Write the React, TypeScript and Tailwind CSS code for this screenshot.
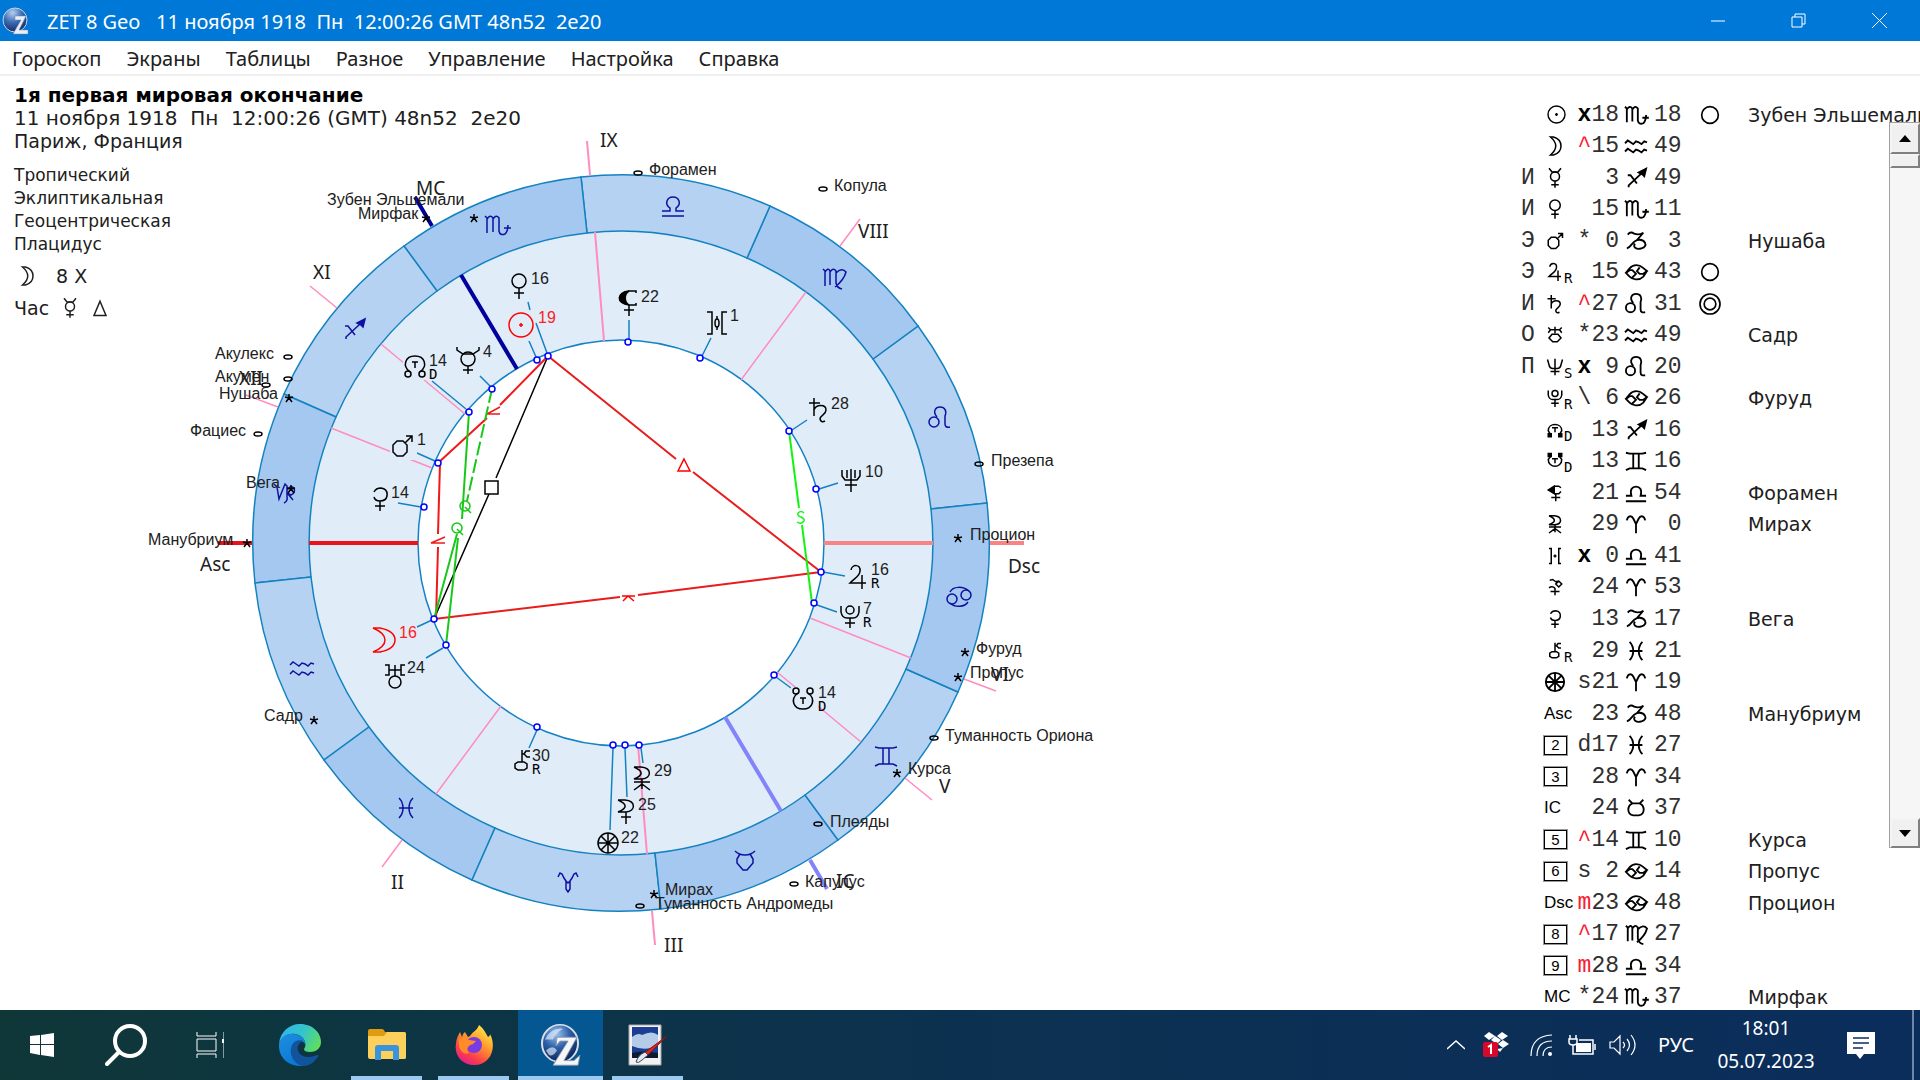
import type { ReactNode } from "react";

const verdana = "font-['DejaVu_Sans',sans-serif]";
const segoe = "font-['Noto_Sans','Open_Sans',sans-serif]";

/* Astrological symbols, each drawn in a 24 x 24 box */
const glyphs: Record<string, ReactNode> = {
  aries: <path d="M2 8 C3 3 7 2 9 6 L12 12 V22 M12 12 L15 6 C17 2 21 3 22 8" />,
  ariesWheel: <path d="M2 7 L4 3 L6 4 L8 8 L10 11 V19 L12 22 L14 19 V11 L16 8 L18 4 L20 3 L22 7 M10 11 L12 13 L14 11" />,
  taurus: <path d="M4 3 L8 7 H16 L20 3 M8 7 C2 10 2 19 9 20 H15 C22 19 22 10 16 7" />,
  taurusWheel: <path d="M2 2 Q6 6 12 6 Q18 6 22 2 M7 5 L4 10 V14 L10 21 H14 L20 14 V10 L17 5" />,
  gemini: <path d="M1 3 L5 4 H19 L23 3 M1 22 L5 20 H19 L23 22 M9 4 V20 M15 4 V20" />,
  cancer: (
    <>
      <path d="M3 7 C6 1 16 1 22 6 M21 17 C18 22 8 23 3 18" />
      <circle cx="5" cy="14" r="5" />
      <circle cx="19" cy="10" r="5" />
    </>
  ),
  cancerTable: <path d="M1 13 L5 8 C9 3 16 4 19 7 L24 11 L20 14 H16 L13 11 L16 7 M24 11 L20 17 C15 22 8 20 5 17 L1 13 L5 10 H8 L12 14 L8 18" />,
  leo: (
    <>
      <circle cx="6" cy="16" r="5" />
      <path d="M9 11 C4 5 8 1 12 1 C17 1 19 5 17 10 V18 Q17 22 22 21" />
    </>
  ),
  virgo: <path d="M1 3 L3 5 V20 M3 6 Q6 1 8 5 V19 M8 6 Q11 1 14 5 V17 Q15 22 20 23 M14 7 Q20 1 24 6 Q22 14 13 21" />,
  libra: <path d="M1 17 H9 V14 C3 10 6 3 12 3 C18 3 21 10 15 14 V17 H23 M1 22 H23" />,
  libraTable: <path d="M1 15 H7 C5 8 8 5 12 5 C16 5 19 8 17 15 H23 M1 21 H23" />,
  scorpio: <path d="M0 3 L2 5 V20 M2 6 Q5 1 8 5 V19 M8 6 Q11 1 14 5 V18 Q15 23 20 21 Q23 18 23 12 M19 15 H26" />,
  sagittarius: (
    <>
      <path d="M3 9 H6 L13 18 M4 22 V20 L18 7" />
      <path d="M23 2 L21 10 L19 8 L15 6 Z" fill="currentColor" />
    </>
  ),
  capricorn: <path d="M3 5 Q6 1 10 4 Q15 6 20 3 L13 11 M2 20 C7 19 7 13 13 11 C22 9 26 18 18 20 C12 22 8 18 11 15" />,
  capricornWheel: <path d="M1 4 L4 7 L6 19 L12 4 L14 6 V17 Q15 21 11 23 M14 10 Q17 5 21 8 Q23 13 18 15 L14 13 M15 14 L20 20" />,
  aquarius: <path d="M0 9 L3 6 L6 8 L9 10 L12 7 L15 8 L18 10 L21 7 L24 8 M0 18 L3 15 L6 17 L9 19 L12 16 L15 17 L18 19 L21 16 L24 17" />,
  pisces: <path d="M5 2 Q9 6 9 12 Q9 18 5 22 M19 2 Q15 6 15 12 Q15 18 19 22 M5 12 H19" />,
  sun: (
    <>
      <circle cx="12" cy="12" r="12" />
      <path d="M12 10 V14 M10 12 H14" />
    </>
  ),
  moon: <path d="M2 0 H9 Q24 3 24 12 Q24 21 9 24 H2 Q14 19 14 12 Q14 5 2 0 Z" />,
  moonTable: <path d="M6 0 H10 Q20 3 20 12 Q20 21 10 24 H6 Q13 18 13 12 Q13 6 6 0 Z" />,
  mercury: (
    <>
      <circle cx="12" cy="12" r="7" />
      <path d="M1 0 V3 L7 7 H17 L23 3 V0 M12 19 V27 M7 23 H17" />
    </>
  ),
  mercuryTable: (
    <>
      <circle cx="12" cy="10" r="6" />
      <path d="M4 -1 L8 4 H16 L20 -1 M12 16 V25 M7 21 H17" />
    </>
  ),
  venus: (
    <>
      <circle cx="12" cy="7" r="7" />
      <path d="M12 14 V25 M7 19 H17" />
    </>
  ),
  mars: (
    <>
      <path d="M7 7 H13 L17 11 V18 L13 22 H7 L3 18 V11 Z M15 9 L22 2 M16 2 H22 V8" />
    </>
  ),
  jupiter: <path d="M5 5 C6 -1 15 -1 14 6 C14 11 9 13 4 18 H20 M16 10 V24" />,
  saturn: <path d="M2 5 H13 M7 0 V18 M7 12 C9 6 19 6 19 12 C19 17 13 17 13 21 Q14 25 18 23" />,
  uranus: (
    <>
      <path d="M2 1 H6 V11 H2 M22 1 H18 V11 H22 M6 6 H18 M12 1 V12" />
      <circle cx="12" cy="18" r="6" />
    </>
  ),
  uranusTable: (
    <>
      <path d="M3 2 L6 5 L3 9 M21 2 L18 5 L21 9 M6 5 H18 M12 1 V10" />
      <path d="M8 11 H16 L20 16 L15 21 H9 L4 16 Z" />
    </>
  ),
  neptune: <path d="M3 2 V8 L6 12 H18 L21 8 V2 M8 2 V10 M16 2 V10 M12 1 V24 M6 17 H18" />,
  neptuneTable: <path d="M2 2 L4 9 Q5 14 9 14 H15 Q19 14 20 9 L22 2 M12 1 V23 M6 18 H18" />,
  pluto: (
    <>
      <path d="M3 2 V8 Q4 14 9 14 H15 Q20 14 21 8 V2 M12 14 V24 M7 19 H17" />
      <circle cx="12" cy="6" r="4" />
    </>
  ),
  northNode: (
    <>
      <path d="M7 18 C-1 12 2 2 12 2 C22 2 25 12 17 18 M9 8 H15 M12 8 V14" />
      <circle cx="5" cy="20" r="3" />
      <circle cx="19" cy="20" r="3" />
    </>
  ),
  northNodeTable: (
    <>
      <path d="M6 18 L3 13 C3 2 21 2 21 13 L18 18 M8 9 H16 M12 9 V15" />
      <path d="M3 17 H7 V21 H3 Z M17 17 H21 V21 H17 Z" fill="currentColor" />
    </>
  ),
  southNode: (
    <>
      <path d="M7 6 C-1 12 2 22 12 22 C22 22 25 12 17 6 M9 11 H15 M12 11 V17" />
      <circle cx="5" cy="4" r="3" />
      <circle cx="19" cy="4" r="3" />
    </>
  ),
  southNodeTable: (
    <>
      <path d="M6 6 L3 10 C3 22 21 22 21 10 L18 6 M8 9 H16 M12 9 V15" />
      <path d="M3 2 H7 V6 H3 Z M17 2 H21 V6 H17 Z" fill="currentColor" />
    </>
  ),
  lilith: (
    <>
      <path d="M12 1 C-1 2 -1 14 12 15 C7 12 7 4 12 1 Z M7 4 L3 6 V10 L7 13 Z" fill="currentColor" />
      <path d="M11 1 H19 V3 M11 15 H19 V13 M12 15 V26 M7 20 H17" />
    </>
  ),
  lilithTable: (
    <>
      <path d="M11 3 L3 8 L11 13 Z" fill="currentColor" />
      <path d="M11 3 H17 L20 5 M12 13 H17 L20 10 M13 13 V23 M7 18 H19" />
    </>
  ),
  selena: <path d="M4 1 H11 C22 2 22 12 12 13 H4 C14 9 13 5 4 1 M12 13 V25 M7 18 H17" />,
  vesta: <path d="M4 1 H11 C22 2 22 12 12 13 H4 C14 9 13 5 4 1 M4 16 H20 M12 13 V18 L4 24 M12 18 L20 24 M12 18 V23" />,
  proserpina: (
    <>
      <path d="M2 1 H7 V23 H2 M22 1 H17 V23 H22 M12 5 V8 M12 16 V19" />
      <ellipse cx="12" cy="12" rx="2" ry="4" />
    </>
  ),
  proserpinaTable: <path d="M4 2 H7 V22 H4 M20 2 H17 V22 H20 M10 12 H14 M12 10 V14 M7 12 H8 M16 12 H17" />,
  pallas: <path d="M5 3 L9 2 L13 5 L17 4 L21 8 L17 12 L13 8 L17 4 M4 13 Q9 10 12 14 V23 M6 18 H18" />,
  ceres: <path d="M6 5 Q8 1 13 1 Q20 2 19 9 Q18 14 12 14 Q7 14 6 10 M12 14 V24 M7 19 H17" />,
  chiron: (
    <path d="M12 13 V1 M20 2 H16 L14 5 L17 8 H20 M12 5 H14 M8 13 H14 L17 15 V19 L14 21 H8 L5 19 V15 Z" />
  ),
  fortune: (
    <>
      <circle cx="12" cy="12" r="10" />
      <path d="M12 2 V22 M2 12 H22 M5 5 L19 19 M19 5 L5 19" />
    </>
  ),
  triangle: <path d="M12 3 L20 22 H4 Z" />,
  ring: <circle cx="12" cy="12" r="10" />,
  doubleRing: (
    <>
      <circle cx="12" cy="12" r="12" />
      <circle cx="12" cy="12" r="7" />
    </>
  ),
};

function Glyph({ name, className }: { name: string; className: string }) {
  return (
    <svg viewBox="0 0 24 24" className={`overflow-visible ${className}`} fill="none" stroke="currentColor" strokeWidth="2" aria-hidden="true">
      {glyphs[name]}
    </svg>
  );
}

/* ---- wheel ---- */
const CX = 621;
const CY = 543;
const R1 = 203;
const R2 = 312;
const R3 = 368;
const SIGN_OFFSET = 6.2;

const at = (deg: number, r: number): [number, number] => [
  Math.round(CX + r * Math.cos((deg * Math.PI) / 180)),
  Math.round(CY - r * Math.sin((deg * Math.PI) / 180)),
];

const sector = (a: number) => {
  const [x1, y1] = at(a, R3);
  const [x2, y2] = at(a + 30, R3);
  const [x3, y3] = at(a + 30, R2);
  const [x4, y4] = at(a, R2);
  return `M${x1} ${y1} A${R3} ${R3} 0 0 0 ${x2} ${y2} L${x3} ${y3} A${R2} ${R2} 0 0 1 ${x4} ${y4} Z`;
};

const signs: [string, number, number][] = [
  ["leo", 940, 418],
  ["virgo", 834, 278],
  ["libra", 673, 206],
  ["scorpio", 497, 225],
  ["sagittarius", 354, 329],
  ["capricornWheel", 285, 492],
  ["aquarius", 302, 668],
  ["pisces", 406, 808],
  ["ariesWheel", 568, 882],
  ["taurusWheel", 745, 861],
  ["gemini", 886, 756],
  ["cancer", 959, 597],
];

const pink = "#ff8cc0";
const cusps: { a: number; color: string; w: number }[] = [
  { a: 180, color: "#e8141c", w: 4 },
  { a: 233.6, color: pink, w: 1.5 },
  { a: 274.8, color: pink, w: 2 },
  { a: 300.8, color: "#8484fa", w: 4 },
  { a: 320.4, color: pink, w: 1.5 },
  { a: 338.4, color: pink, w: 1.5 },
  { a: 0, color: "#f88488", w: 4 },
  { a: 53.6, color: pink, w: 1.5 },
  { a: 94.8, color: pink, w: 2 },
  { a: 120.8, color: "#00009c", w: 4 },
  { a: 140.4, color: pink, w: 1.5 },
  { a: 158.4, color: pink, w: 1.5 },
];

const planets: { g: string; x: number; y: number; d: string; dx: number; dy: number; red?: boolean; s?: string }[] = [
  { g: "venus", x: 519, y: 286, d: "16", dx: 531, dy: 284 },
  { g: "sun", x: 521, y: 325, d: "19", dx: 538, dy: 323, red: true },
  { g: "mercury", x: 468, y: 359, d: "4", dx: 483, dy: 357 },
  { g: "northNode", x: 415, y: 366, d: "14", dx: 429, dy: 366, s: "D" },
  { g: "mars", x: 402, y: 446, d: "1", dx: 417, dy: 445 },
  { g: "ceres", x: 380, y: 499, d: "14", dx: 391, dy: 498 },
  { g: "lilith", x: 629, y: 302, d: "22", dx: 641, dy: 302 },
  { g: "proserpina", x: 717, y: 323, d: "1", dx: 730, dy: 321 },
  { g: "saturn", x: 819, y: 410, d: "28", dx: 831, dy: 409 },
  { g: "neptune", x: 851, y: 480, d: "10", dx: 865, dy: 477 },
  { g: "jupiter", x: 858, y: 577, d: "16", dx: 871, dy: 575, s: "R" },
  { g: "pluto", x: 850, y: 616, d: "7", dx: 863, dy: 614, s: "R" },
  { g: "southNode", x: 803, y: 699, d: "14", dx: 818, dy: 698, s: "D" },
  { g: "moon", x: 383, y: 640, d: "16", dx: 399, dy: 638, red: true },
  { g: "uranus", x: 395, y: 676, d: "24", dx: 407, dy: 673 },
  { g: "chiron", x: 522, y: 761, d: "30", dx: 532, dy: 761, s: "R" },
  { g: "vesta", x: 642, y: 778, d: "29", dx: 654, dy: 776 },
  { g: "selena", x: 626, y: 811, d: "25", dx: 638, dy: 810 },
  { g: "fortune", x: 608, y: 843, d: "22", dx: 621, dy: 843 },
];

const points: [number, number][] = [
  [548, 356], [537, 360], [492, 389], [469, 412], [438, 463], [424, 507], [628, 342], [700, 358], [789, 431],
  [816, 489], [821, 572], [814, 603], [774, 675], [434, 619], [446, 645], [537, 727], [613, 745], [625, 745], [639, 745],
];

const leaders =
  "M528 302 L530 310 M536 323 L547 353 M529 341 L536 357 M480 376 L490 386 M432 381 L466 409 M417 453 L435 461 " +
  "M398 503 L421 507 M629 320 V339 M711 338 L702 356 M807 420 L792 430 M838 483 L819 489 M823 572 L845 576 " +
  "M817 605 L837 612 M776 677 L791 688 M417 627 L432 620 M426 658 L443 648 M529 748 L537 730 M613 748 L610 830 " +
  "M625 748 L627 797 M641 748 L643 763";

const labels: [string, number, number][] = [
  ["Зубен Эльшемали", 327, 205], ["Мирфак", 358, 219], ["Форамен", 649, 175], ["Копула", 834, 191],
  ["Акулекс", 215, 359], ["Акумен", 215, 382], ["Нушаба", 219, 399], ["Фациес", 190, 436], ["Вега", 246, 488],
  ["Манубриум", 148, 545], ["Садр", 264, 721], ["Мирах", 665, 895], ["Туманность Андромеды", 655, 909],
  ["Капулус", 805, 887], ["Плеяды", 830, 827], ["Курса", 908, 774], ["Туманность Ориона", 945, 741],
  ["Пропус", 970, 678], ["Фуруд", 976, 654], ["Процион", 970, 540], ["Презепа", 991, 466],
];

const houses: [string, number, number][] = [
  ["MC", 416, 195], ["IX", 600, 147], ["VIII", 858, 238], ["XI", 313, 279], ["XII", 239, 385], ["Asc", 200, 571],
  ["II", 391, 889], ["III", 664, 952], ["IC", 836, 888], ["V", 939, 793], ["VI", 991, 681], ["Dsc", 1008, 573],
];

const stars: [number, number][] = [
  [426, 218], [474, 218], [289, 398], [291, 489], [247, 543], [314, 720], [654, 894], [897, 773], [958, 677], [965, 652], [958, 538],
];
const nebulae: [number, number][] = [
  [638, 173], [823, 189], [288, 357], [288, 379], [266, 385], [258, 434], [640, 906], [794, 884], [818, 824], [934, 738], [979, 464],
];

function Wheel() {
  return (
    <svg
      viewBox="0 76 1400 934"
      preserveAspectRatio="xMinYMin meet"
      className="col-start-1 row-start-1 h-full w-full"
      fill="none"
      role="img"
      aria-label="Карта гороскопа"
    >
      <circle cx={CX} cy={CY} r={R2} fill="#e0edf9" />
      <circle cx={CX} cy={CY} r={R1} fill="#fff" stroke="#1482c4" strokeWidth="1.5" />
      {signs.map(([name], i) => (
        <path key={name} d={sector(SIGN_OFFSET + i * 30)} fill={i % 2 ? "#a5c8f0" : "#b5d2f2"} stroke="#1482c0" strokeWidth="1.5" />
      ))}
      {cusps.map((c) => {
        const [x1, y1] = at(c.a, R1);
        const [x2, y2] = at(c.a, R2);
        const [x3, y3] = at(c.a, R3 + 1);
        const [x4, y4] = at(c.a, 403);
        return <path key={c.a} d={`M${x1} ${y1} L${x2} ${y2} M${x3} ${y3} L${x4} ${y4}`} stroke={c.color} strokeWidth={c.w} />;
      })}

      <g strokeWidth="1.5">
        <path d="M548 356 L496 478 M489 494 L434 619" stroke="#000" />
        <rect x="485" y="481" width="13" height="13" stroke="#000" />
        <path d="M548 356 L500 405 M487 418 L438 463 M440 463 L438 534 M438 547 L436 619" stroke="#f01818" strokeWidth="2" />
        <path d="M500 407 L487 414 H500" stroke="#f01818" />
        <path d="M445 537 L431 543 H445" stroke="#f01818" />
        <path d="M548 356 L676 459 M693 472 L821 572 M434 619 L620 597 M638 595 L821 572" stroke="#e81c1c" strokeWidth="2" />
        <path d="M684 459 L690 471 H678 Z" stroke="#ff0000" />
        <path d="M622 596 H635 M628 596 L623 601 M628 596 L634 601" stroke="#ff0000" />
        <path d="M469 412 L462 519 M457 534 L434 619 M458 538 L446 645" stroke="#18c818" strokeWidth="2" />
        <path d="M492 389 L467 501" stroke="#18c818" strokeDasharray="14 4" strokeWidth="2" />
        <circle cx="465" cy="506" r="5" stroke="#18c818" />
        <path d="M465 507 L471 513" stroke="#18c818" />
        <circle cx="457" cy="528" r="5" stroke="#18c818" />
        <path d="M457 529 L463 535" stroke="#18c818" />
        <path d="M789 431 L799 508 M802 525 L812 603" stroke="#14f414" strokeWidth="2" />
        <path d="M804 513 Q801 510 798 513 Q797 516 801 517 Q805 519 804 521 Q801 525 797 522" stroke="#14f414" />
      </g>

      <path d={leaders} stroke="#1482c0" strokeWidth="1.5" />
      {points.map(([x, y]) => (
        <circle key={`${x}-${y}`} cx={x} cy={y} r="3" fill="#fff" stroke="#0000ff" strokeWidth="1.5" />
      ))}

      <g stroke="#1010a0" color="#1010a0" strokeWidth="1.5">
        {signs.map(([name, x, y]) => (
          <g key={name} transform={`translate(${x - 12} ${y - 12})`}>
            {glyphs[name]}
          </g>
        ))}
      </g>

      {planets.map((p) => (
        <g key={p.g} className="font-['Liberation_Sans',sans-serif] text-base">
          {p.g === "northNode" || p.g === "southNode" || p.g === "mars" ? (
            <rect x={p.x - 12} y={p.y - 12} width="27" height="26" fill="#e0edf9" />
          ) : null}
          <g
            transform={`translate(${p.x - 12} ${p.y - 12})`}
            stroke={p.red ? "#ff0000" : "#000"}
            color="#000"
            strokeWidth="1.5"
          >
            {glyphs[p.g]}
          </g>
          <text x={p.dx} y={p.dy} fill={p.red ? "#ff2020" : "#202020"}>
            {p.d}
          </text>
          {p.s ? (
            <text x={p.dx} y={p.dy + 13} fill="#000" className="font-['DejaVu_Sans_Mono',monospace] text-sm">
              {p.s}
            </text>
          ) : null}
        </g>
      ))}

      <g stroke="#000" strokeWidth="1.5">
        {stars.map(([x, y]) => (
          <path key={`${x}-${y}`} d={`M${x} ${y - 4} V${y} L${x - 3} ${y + 4} M${x} ${y} L${x + 3} ${y + 4} M${x - 4} ${y - 1} L${x} ${y} L${x + 4} ${y - 1}`} />
        ))}
        {nebulae.map(([x, y]) => (
          <ellipse key={`${x}-${y}`} cx={x} cy={y} rx="4" ry="2" />
        ))}
      </g>
      <g fill="#202020" className="font-['Liberation_Sans',sans-serif] text-base">
        {labels.map(([t, x, y]) => (
          <text key={t} x={x} y={y}>
            {t}
          </text>
        ))}
      </g>
      <g fill="#202020" className="font-['Noto_Sans',sans-serif] text-[19px]">
        {houses.map(([t, x, y]) => (
          <text key={t} x={x} y={y}>
            {t}
          </text>
        ))}
      </g>
    </svg>
  );
}

/* ---- positions table ---- */
type Row = { l?: string; g?: string; t?: string; n?: string; s?: string; m?: string; d: string; z: string; min: string; ring?: string; star?: string };
const rows: Row[] = [
  { g: "sun", m: "x", d: "18", z: "scorpio", min: "18", ring: "ring", star: "Зубен Эльшемали" },
  { g: "moonTable", m: "^", d: "15", z: "aquarius", min: "49" },
  { l: "И", g: "mercuryTable", d: "3", z: "sagittarius", min: "49" },
  { l: "И", g: "venus", d: "15", z: "scorpio", min: "11" },
  { l: "Э", g: "mars", m: "*", d: "0", z: "capricorn", min: "3", star: "Нушаба" },
  { l: "Э", g: "jupiter", s: "R", d: "15", z: "cancerTable", min: "43", ring: "ring" },
  { l: "И", g: "saturn", m: "^", d: "27", z: "leo", min: "31", ring: "doubleRing" },
  { l: "О", g: "uranusTable", m: "*", d: "23", z: "aquarius", min: "49", star: "Садр" },
  { l: "П", g: "neptuneTable", s: "S", m: "x", d: "9", z: "leo", min: "20" },
  { g: "pluto", s: "R", m: "\\", d: "6", z: "cancerTable", min: "26", star: "Фуруд" },
  { g: "northNodeTable", s: "D", d: "13", z: "sagittarius", min: "16" },
  { g: "southNodeTable", s: "D", d: "13", z: "gemini", min: "16" },
  { g: "lilithTable", d: "21", z: "libraTable", min: "54", star: "Форамен" },
  { g: "vesta", d: "29", z: "aries", min: "0", star: "Мирах" },
  { g: "proserpinaTable", m: "x", d: "0", z: "libraTable", min: "41" },
  { g: "pallas", d: "24", z: "aries", min: "53" },
  { g: "ceres", d: "13", z: "capricorn", min: "17", star: "Вега" },
  { g: "chiron", s: "R", d: "29", z: "pisces", min: "21" },
  { g: "fortune", m: "s", d: "21", z: "aries", min: "19" },
  { t: "Asc", d: "23", z: "capricorn", min: "48", star: "Манубриум" },
  { n: "2", m: "d", d: "17", z: "pisces", min: "27" },
  { n: "3", d: "28", z: "aries", min: "34" },
  { t: "IC", d: "24", z: "taurus", min: "37" },
  { n: "5", m: "^", d: "14", z: "gemini", min: "10", star: "Курса" },
  { n: "6", m: "s", d: "2", z: "cancerTable", min: "14", star: "Пропус" },
  { t: "Dsc", m: "m", d: "23", z: "cancerTable", min: "48", star: "Процион" },
  { n: "8", m: "^", d: "17", z: "virgo", min: "27" },
  { n: "9", m: "m", d: "28", z: "libraTable", min: "34" },
  { t: "MC", m: "*", d: "24", z: "scorpio", min: "37", star: "Мирфак" },
];

const markStyle = (m?: string) => (m === "^" || m === "m" ? "text-[#f82030]" : m === "x" ? "font-bold text-black" : "text-[#303030]");

function Positions() {
  return (
    <table className="mt-[23px] h-[914px] w-[374px] shrink-0 table-fixed border-collapse font-['Liberation_Mono',monospace] text-[23px] leading-6 text-[#303030]">
      <colgroup>
        <col className="w-7" />
        <col className="w-[34px]" />
        <col className="w-[42px]" />
        <col className="w-[34px]" />
        <col className="w-[38px]" />
        <col className="w-[38px]" />
        <col className="w-[160px]" />
      </colgroup>
      <tbody>
        {rows.map((r, i) => (
          <tr key={i}>
            <td className="p-0 pl-1.5">{r.l}</td>
            <td className="p-0 text-black">
              <span className="flex h-6 items-center pl-px">
                {r.g ? <Glyph name={r.g} className={r.g === "fortune" ? "size-[22px]" : r.g === "sun" ? "ml-1 size-[17px]" : "ml-0.5 size-[18px]"} /> : null}
                {r.s ? (
                  <span className="-mr-1 self-end font-['DejaVu_Sans_Mono',monospace] text-sm leading-3">{r.s}</span>
                ) : null}
                {r.t ? <span className="font-['Liberation_Sans',sans-serif] text-[17px] leading-6">{r.t}</span> : null}
                {r.n ? (
                  <span className="flex h-[19px] w-[23px] items-center justify-center border border-black font-['Liberation_Sans',sans-serif] text-[15px] leading-4 outline outline-black/40">
                    {r.n}
                  </span>
                ) : null}
              </span>
            </td>
            <td className="p-0 text-right whitespace-pre">
              <span className={markStyle(r.m)}>{r.m}</span>
              {r.d.padStart(2)}
            </td>
            <td className="p-0 text-black">
              <Glyph name={r.z} className="mx-auto size-[22px]" />
            </td>
            <td className="p-0 pl-px whitespace-pre">{r.min.padStart(2)}</td>
            <td className="p-0 text-black">{r.ring ? <Glyph name={r.ring} className="mx-auto size-5" /> : null}</td>
            <td className={`p-0 pl-[19px] text-[19px] whitespace-nowrap text-[#202020] ${verdana}`}>{r.star}</td>
          </tr>
        ))}
      </tbody>
    </table>
  );
}

function ScrollBar() {
  const face = "flex items-center justify-center border-2 border-t-[#f4f4f4] border-r-[#808080] border-b-[#808080] border-l-[#f4f4f4] bg-[#f0f0f0]";
  return (
    <div className="mt-[46px] flex h-[726px] w-[31px] shrink-0 flex-col border-t border-l border-[#a0a0a0] bg-[#f6f6f6]">
      <button aria-label="Вверх" className={`h-[31px] ${face}`}>
        <svg viewBox="0 0 12 7" className="h-[7px] w-3"><path d="M6 0 L12 7 H0 Z" /></svg>
      </button>
      <div className={`h-[14px] ${face}`} />
      <div className="flex-1" />
      <button aria-label="Вниз" className={`h-[30px] ${face}`}>
        <svg viewBox="0 0 12 7" className="h-[7px] w-3"><path d="M0 0 H12 L6 7 Z" /></svg>
      </button>
    </div>
  );
}

/* ---- icons ---- */
function ZetIcon({ className }: { className: string }) {
  return (
    <svg viewBox="0 0 40 54" preserveAspectRatio="none" className={className} aria-hidden="true">
      <defs>
        <radialGradient id="zet" cx="40%" cy="25%" r="75%">
          <stop offset="0" stopColor="#9cc4ee" />
          <stop offset="0.5" stopColor="#2c5ea8" />
          <stop offset="1" stopColor="#0c2458" />
        </radialGradient>
      </defs>
      <ellipse cx="19" cy="25" rx="18" ry="24" fill="url(#zet)" stroke="#d8dfe8" strokeWidth="2" />
      <path d="M4 20 Q10 4 22 6 Q14 12 12 20 Z M5 34 Q12 26 16 34 Q12 42 8 40 Z" fill="#dce8f6" opacity="0.7" />
      <path d="M16 17 H36 L23 47 H33 L39 40 L37 53 H12 L27 22 H19 L15 28 Z" fill="#f4f6f8" stroke="#8a95a8" strokeWidth="1" />
    </svg>
  );
}

function ZetSmallIcon() {
  return (
    <svg viewBox="0 0 28 28" className="ml-0.5 size-7" aria-hidden="true">
      <defs>
        <radialGradient id="zetSmall" cx="40%" cy="20%" r="80%">
          <stop offset="0" stopColor="#b4d0f0" />
          <stop offset="0.5" stopColor="#3c6cb4" />
          <stop offset="1" stopColor="#142c64" />
        </radialGradient>
      </defs>
      <circle cx="13" cy="13" r="12" fill="url(#zetSmall)" stroke="#c8d4e4" />
      <path d="M13 9 H24 L17 23 H26 V27 H11 L19 13 H13 Z" fill="#e8eef6" stroke="#6c84b0" strokeWidth="0.5" />
    </svg>
  );
}

function EdgeIcon() {
  return (
    <svg viewBox="0 0 42 42" className="size-[42px]" aria-hidden="true">
      <defs>
        <linearGradient id="edgeTop" x1="0" y1="0.3" x2="1" y2="0.7">
          <stop offset="0" stopColor="#2fb4ea" />
          <stop offset="0.5" stopColor="#34c6c8" />
          <stop offset="1" stopColor="#62de58" />
        </linearGradient>
        <linearGradient id="edgeLow" x1="0" y1="0" x2="0.5" y2="1">
          <stop offset="0" stopColor="#1f8fe0" />
          <stop offset="1" stopColor="#0a78d4" />
        </linearGradient>
      </defs>
      <path d="M0 20 C1 8 10 0 21 0 C34 0 42 9 42 18 C42 25 36 28 31 28 C27 28 25 27 25 25 C28 22 27 12 16 10 C8 9 2 14 0 20 Z" fill="url(#edgeTop)" />
      <path d="M0 20 C2 12 9 9 15 10 C23 11 27 16 26 20 C24 16 18 16 15 20 C11 28 16 40 25 42 C11 43 -1 35 0 20 Z" fill="url(#edgeLow)" />
      <path d="M13 21 C15 17 20 15 24 17 C15 21 18 33 29 33 C34 33 37 31 39 31 C40 31 39 33 38 34 C34 40 29 42 24 42 C16 41 9 31 13 21 Z" fill="#11549c" />
    </svg>
  );
}

function FolderIcon() {
  return (
    <svg viewBox="0 0 38 32" className="h-8 w-[38px]" aria-hidden="true">
      <path d="M0 2 Q0 0 2 0 H14 Q16 0 17 3 H36 Q38 3 38 5 V28 H0 Z" fill="#e09c10" />
      <path d="M0 7 H16 L19 3 H36 Q38 3 38 5 V29 Q38 30 36 30 H2 Q0 30 0 28 Z" fill="#fdd05c" />
      <path d="M7 31 V19 Q7 16 10 16 H28 Q31 16 31 19 V31 H25 V22 H13 V31 Z" fill="#3a94dc" />
    </svg>
  );
}

function FirefoxIcon() {
  return (
    <svg viewBox="0 0 38 40" className="h-10 w-[38px]" aria-hidden="true">
      <defs>
        <linearGradient id="fox" x1="0.8" y1="0" x2="0.2" y2="1">
          <stop offset="0" stopColor="#fff04c" />
          <stop offset="0.4" stopColor="#ff9a2c" />
          <stop offset="0.75" stopColor="#fc3c4c" />
          <stop offset="1" stopColor="#e0189c" />
        </linearGradient>
      </defs>
      <path d="M24 0 C30 5 31 9 33 12 C35 11 35 10 35 9 C42 22 36 40 19 40 C6 40 -1 29 1 19 C1 14 3 11 5 7 L7 12 Q8 8 10 7 L13 12 L15 11 C17 7 22 6 24 0 Z" fill="url(#fox)" />
      <circle cx="19" cy="20" r="8" fill="#7a3ce0" />
      <path d="M4 14 Q10 10 14 15 L21 16 Q19 19 15 20 Q10 24 14 28 Q8 31 4 22 Z" fill="#ff8c28" />
    </svg>
  );
}

function PaintIcon() {
  return (
    <svg viewBox="0 0 40 42" className="h-[42px] w-10" aria-hidden="true">
      <path d="M1 1 H33 V41 H1 Z" fill="#f2f2f2" stroke="#a8a8a8" />
      <path d="M4 3 H30 V34 H4 Z" fill="#1c3f94" />
      <path d="M4 13 Q10 8 14 11 Q24 6 30 11 V21 Q18 28 4 22 Z" fill="#b4cce8" />
      <path d="M4 29 Q14 26 30 29 V34 H4 Z" fill="#0c1c34" />
      <path d="M39 12 L19 32 L16 29 Z" fill="#d02828" stroke="#8c1414" />
      <path d="M17 28 L20 31 L14 36 Q10 40 8 38 Q10 31 17 28 Z" fill="#e4e8ee" stroke="#3a4a60" />
    </svg>
  );
}

const tabs: { label: string; icon: ReactNode; open?: boolean; active?: boolean }[] = [
  { label: "Microsoft Edge", icon: <EdgeIcon /> },
  { label: "Проводник", icon: <FolderIcon />, open: true },
  { label: "Firefox", icon: <FirefoxIcon />, open: true },
  { label: "ZET 8 Geo", icon: <ZetIcon className="h-[42px] w-10" />, open: true, active: true },
  { label: "Paint", icon: <PaintIcon />, open: true },
];

function Taskbar() {
  const sys = "flex h-full w-[84px] items-center justify-center";
  return (
    <footer className={`flex h-[70px] shrink-0 items-center overflow-hidden bg-linear-to-r from-[#0f3738] via-[#0c3150] to-[#0b2d5c] text-white ${segoe}`}>
      <button aria-label="Пуск" className={sys}>
        <svg viewBox="0 0 24 24" className="size-6" fill="#fff">
          <path d="M0 3 L10 2 V11 H0 Z M11 2 L24 0 V11 H11 Z M0 12 H10 V22 L0 20 Z M11 12 H24 V24 L11 22 Z" />
        </svg>
      </button>
      <button aria-label="Поиск" className={sys}>
        <svg viewBox="0 0 42 42" className="size-[42px]" fill="none" stroke="#fff">
          <circle cx="25" cy="17" r="15" strokeWidth="4" />
          <path d="M14 28 L2 40" strokeWidth="4" strokeLinecap="round" />
        </svg>
      </button>
      <button aria-label="Представление задач" className={sys}>
        <svg viewBox="0 0 28 28" className="size-7" fill="none" stroke="#fff">
          <path d="M1 1 V5 H20 V1 M1 8 H20 V20 H1 Z M1 27 V23 H20 V27 M28 1 V8 M28 12 V27" />
          <path d="M26 8 H30 V12 H26 Z" fill="#fff" stroke="none" />
        </svg>
      </button>
      <div className="ml-[5px] flex h-full gap-0.5">
        {tabs.map((t) => (
          <button key={t.label} aria-label={t.label} className={`flex h-full w-[85px] flex-col items-center ${t.active ? "bg-[#045790]" : ""}`}>
            <span className="flex h-[66px] items-center justify-center pt-1">{t.icon}</span>
            {t.open ? <span className={`h-1 bg-[#9bc9f0] ${t.active ? "w-full" : "w-[71px]"}`} /> : null}
          </button>
        ))}
      </div>
      <div className="ml-auto flex h-full items-center">
        <button aria-label="Скрытые значки" className="flex w-10 justify-center">
          <svg viewBox="0 0 18 10" className="h-2.5 w-[18px]" fill="none" stroke="#fff" strokeWidth="1.5"><path d="M0 9 L9 1 L18 9" /></svg>
        </button>
        <button aria-label="Dropbox" className="flex w-10 justify-center">
          <svg viewBox="0 0 26 26" className="size-[26px]">
            <path d="M6 0 L12 4 L6 8 L1 4 Z M19 0 L25 4 L19 8 L14 4 Z M12 4 L18 8 L14 12 L8 8 Z M20 8 L26 12 L20 16 L15 12 Z M14 17 L20 16 L17 20 Z" fill="#fff" />
            <rect x="0" y="10" width="15" height="15" rx="2" fill="#d8082c" />
            <path d="M5 15 L8 13 V22" fill="none" stroke="#fff" strokeWidth="2" />
          </svg>
        </button>
        <button aria-label="Сеть" className="flex w-[50px] justify-center">
          <svg viewBox="0 0 22 22" className="size-[22px]" fill="none" stroke="#fff" strokeWidth="1.2">
            <path d="M1 22 Q1 2 22 1 M7 22 Q7 7 22 7 M13 22 Q13 13 22 13" />
            <circle cx="20" cy="20" r="2" fill="#fff" stroke="none" />
          </svg>
        </button>
        <button aria-label="Батарея" className="flex w-8 justify-center">
          <svg viewBox="0 0 28 20" className="h-5 w-7" fill="none" stroke="#fff" strokeWidth="1.5">
            <path d="M2 0 V4 M8 0 V4 M1 4 H9 V7 Q9 10 5 10 Q1 10 1 7 Z M5 10 V19 H25 V5 H11 M27 9 V15" />
            <path d="M8 8 H23 V17 H8 Z" fill="#fff" stroke="none" />
          </svg>
        </button>
        <button aria-label="Громкость" className="flex w-[50px] justify-center">
          <svg viewBox="0 0 28 22" className="h-[22px] w-7" fill="none" stroke="#fff" strokeWidth="1.2">
            <path d="M1 8 H5 L11 2 V20 L5 14 H1 Z M14 8 Q17 11 14 14 M18 5 Q23 11 18 17 M22 1 Q30 11 22 21" />
          </svg>
        </button>
        <button className="w-[56px] text-center text-[20px]">РУС</button>
        <div className="w-[124px] text-center text-[19px] leading-[33px]">
          <div>18:01</div>
          <div>05.07.2023</div>
        </div>
        <button aria-label="Уведомления" className="flex w-20 justify-center pr-3.5">
          <svg viewBox="0 0 28 27" className="h-[27px] w-7">
            <path d="M0 0 H28 V22 H17 L13 27 L9 22 H0 Z" fill="#fff" />
            <path d="M6 6 H22 M6 11 H22 M6 16 H16" stroke="#0b2d5c" strokeWidth="1.5" />
          </svg>
        </button>
        <span className="mr-1.5 ml-1 h-full w-0.5 bg-[#6f86a4]" />
      </div>
    </footer>
  );
}

export default function App() {
  return (
    <div className="flex h-screen flex-col overflow-hidden bg-white text-[#202020]">
      <header className={`flex h-[41px] shrink-0 items-center bg-[#0078d7] text-white ${segoe}`}>
        <ZetSmallIcon />
        <h1 className="ml-[17px] flex-1 pt-0.5 text-[20px] whitespace-pre">ZET 8 Geo   11 ноября 1918  Пн  12:00:26 GMT 48n52  2e20</h1>
        <button aria-label="Свернуть" className="flex h-full w-[81px] items-center justify-center">
          <svg viewBox="0 0 14 14" className="size-3.5" stroke="#fff"><path d="M0 7 H14" /></svg>
        </button>
        <button aria-label="Восстановить" className="flex h-full w-[81px] items-center justify-center">
          <svg viewBox="0 0 15 15" className="size-[15px]" fill="none" stroke="#fff"><path d="M1 4 H11 V14 H1 Z M4 4 V1 H14 V11 H11" /></svg>
        </button>
        <button aria-label="Закрыть" className="flex h-full w-[81px] items-center justify-center">
          <svg viewBox="0 0 15 15" className="size-[15px]" stroke="#fff"><path d="M0 0 L15 15 M15 0 L0 15" /></svg>
        </button>
      </header>
      <nav className={`flex h-[35px] shrink-0 items-center gap-[25px] border-b-2 border-[#f0f0f0] pt-0.5 pl-3 text-[20px] text-[#202020] ${segoe}`}>
        {["Гороскоп", "Экраны", "Таблицы", "Разное", "Управление", "Настройка", "Справка"].map((m) => (
          <button key={m}>{m}</button>
        ))}
      </nav>
      <main className="flex min-h-0 flex-1 overflow-hidden">
        <div className="grid min-h-0 min-w-0 flex-1 grid-cols-1 grid-rows-1">
          <Wheel />
          <section className={`z-10 col-start-1 row-start-1 self-start pt-2 pl-[14px] text-[20px] leading-[23px] text-[#202020] ${verdana}`}>
            <h2 className="font-bold text-black">1я первая мировая окончание</h2>
            <p className="whitespace-pre">11 ноября 1918  Пн  12:00:26 (GMT) 48n52  2e20</p>
            <p className="text-[19px]">Париж, Франция</p>
            <div className="mt-[11px] text-[17px] leading-[23px]">
              <p>Тропический</p>
              <p>Эклиптикальная</p>
              <p>Геоцентрическая</p>
              <p>Плацидус</p>
            </div>
            <p className="mt-1 flex h-8 items-center gap-5 text-[19px]">
              <Glyph name="moonTable" className="ml-1 size-[18px]" />8 X
            </p>
            <p className="flex h-8 items-center gap-3 text-[19px]">
              Час
              <Glyph name="mercuryTable" className="size-[18px]" />
              <Glyph name="triangle" className="size-[18px]" />
            </p>
          </section>
        </div>
        <Positions />
        <ScrollBar />
      </main>
      <Taskbar />
    </div>
  );
}
